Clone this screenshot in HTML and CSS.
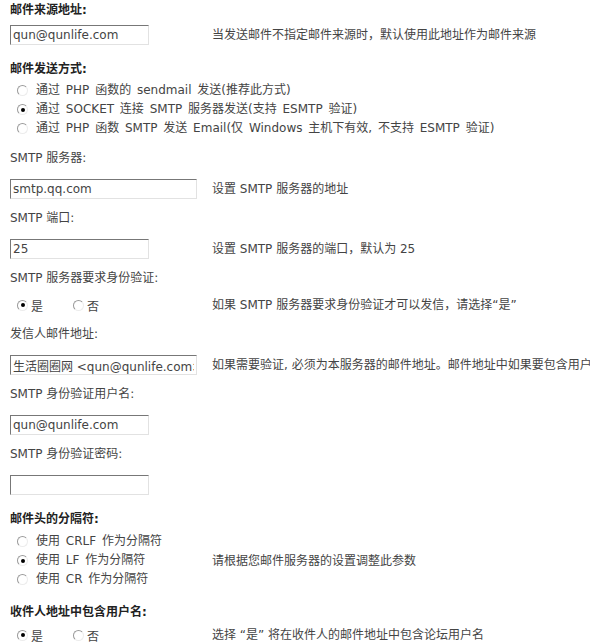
FILE: index.html
```html
<!DOCTYPE html>
<html lang="zh">
<head>
<meta charset="utf-8">
<title>邮件设置</title>
<link rel="stylesheet" href="styles.css">
</head>
<body>
<div class="form">
  <div class="head">邮件来源地址:</div>
  <div class="row r-first">
    <div class="ctl"><input class="txt short" type="text" value="qun@qunlife.com"></div>
    <div class="desc">当发送邮件不指定邮件来源时，默认使用此地址作为邮件来源</div>
  </div>

  <div class="head h-gap">邮件发送方式:</div>
  <div class="opts o-mail">
    <div class="opt"><span class="radio"></span><span class="otext">通过 PHP 函数的 sendmail 发送(推荐此方式)</span></div>
    <div class="opt"><span class="radio on"></span><span class="otext">通过 SOCKET 连接 SMTP 服务器发送(支持 ESMTP 验证)</span></div>
    <div class="opt"><span class="radio"></span><span class="otext">通过 PHP 函数 SMTP 发送 Email(仅 Windows 主机下有效, 不支持 ESMTP 验证)</span></div>
  </div>

  <div class="sub s-first">SMTP 服务器:</div>
  <div class="row">
    <div class="ctl"><input class="txt long" type="text" value="smtp.qq.com"></div>
    <div class="desc">设置 SMTP 服务器的地址</div>
  </div>

  <div class="sub">SMTP 端口:</div>
  <div class="row">
    <div class="ctl"><input class="txt short" type="text" value="25"></div>
    <div class="desc">设置 SMTP 服务器的端口，默认为 25</div>
  </div>

  <div class="sub">SMTP 服务器要求身份验证:</div>
  <div class="row r-radio">
    <div class="ctl yn">
      <span class="yes"><span class="radio on"></span>是</span>
      <span class="no"><span class="radio"></span>否</span>
    </div>
    <div class="desc">如果 SMTP 服务器要求身份验证才可以发信，请选择“是”</div>
  </div>

  <div class="sub">发信人邮件地址:</div>
  <div class="row">
    <div class="ctl"><input class="txt long" type="text" value="生活圈圈网 &lt;qun@qunlife.com&gt;"></div>
    <div class="desc">如果需要验证, 必须为本服务器的邮件地址。邮件地址中如果要包含用户</div>
  </div>

  <div class="sub">SMTP 身份验证用户名:</div>
  <div class="row">
    <div class="ctl"><input class="txt short" type="text" value="qun@qunlife.com"></div>
    <div class="desc"></div>
  </div>

  <div class="sub">SMTP 身份验证密码:</div>
  <div class="row">
    <div class="ctl"><input class="txt short" type="password" value=""></div>
    <div class="desc"></div>
  </div>

  <div class="head h-gap">邮件头的分隔符:</div>
  <div class="row r-opts">
    <div class="opts">
      <div class="opt"><span class="radio"></span><span class="otext">使用 CRLF 作为分隔符</span></div>
      <div class="opt"><span class="radio on"></span><span class="otext">使用 LF 作为分隔符</span></div>
      <div class="opt"><span class="radio"></span><span class="otext">使用 CR 作为分隔符</span></div>
    </div>
    <div class="desc">请根据您邮件服务器的设置调整此参数</div>
  </div>

  <div class="head h-gap2">收件人地址中包含用户名:</div>
  <div class="row r-last">
    <div class="ctl yn">
      <span class="yes"><span class="radio on"></span>是</span>
      <span class="no"><span class="radio"></span>否</span>
    </div>
    <div class="desc">选择 “是” 将在收件人的邮件地址中包含论坛用户名</div>
  </div>
</div>
</body>
</html>
```

FILE: styles.css
```css
html, body {
  margin: 0;
  padding: 0;
  background: #fff;
  overflow: hidden;
}

body {
  font-family: "DejaVu Sans", Verdana, "Noto Sans CJK SC", sans-serif;
  font-size: 12px;
  color: #444;
}

.form {
  padding: 0 0 0 10px;
}

.head {
  font-weight: bold;
  color: #222;
  line-height: 20px;
  height: 20px;
  white-space: nowrap;
}

.h-gap { margin-top: 14px; }
.h-gap2 { margin-top: 13px; }

.sub {
  line-height: 20px;
  height: 20px;
  margin-top: 9px;
  white-space: nowrap;
}

.s-first { margin-top: 10px; }

.row {
  display: grid;
  grid-template-columns: 202px minmax(0, 1fr);
  align-items: center;
  margin-top: 11px;
}

.r-first { margin-top: 5px; }
.r-radio { margin-top: 7px; height: 20px; }
.r-opts { margin-top: 3px; }
.r-last { margin-top: 3px; height: 20px; }

.ctl {
  display: flex;
  align-items: center;
}

.desc {
  white-space: nowrap;
  overflow: hidden;
  line-height: 20px;
}

.txt {
  box-sizing: border-box;
  height: 20px;
  margin: 0;
  padding: 0 2px;
  border: 1px solid;
  border-color: #777 #e2e2e2 #e2e2e2 #777;
  font-family: "DejaVu Sans", Verdana, "Noto Sans CJK SC", sans-serif;
  font-size: 12px;
  color: #444;
  background: #fff;
  outline: none;
}

.short { width: 139px; }
.long { width: 187px; }

.opts {
  display: flex;
  flex-direction: column;
}

.o-mail { margin-top: 2px; }

.opt {
  display: flex;
  align-items: center;
  height: 19px;
  line-height: 19px;
  padding-left: 7px;
  white-space: nowrap;
}

.otext { margin-left: 8px; word-spacing: 2px; }

.radio {
  box-sizing: border-box;
  display: inline-block;
  position: relative;
  width: 11px;
  height: 11px;
  border-radius: 50%;
  border: 1px solid;
  border-color: #9a9a9a #ececec #ececec #9a9a9a;
  background: #fff;
  flex: none;
}

.radio.on::after {
  content: "";
  position: absolute;
  left: 2.5px;
  top: 2.5px;
  width: 4px;
  height: 4px;
  border-radius: 50%;
  background: #000;
}

.yn {
  height: 20px;
  padding-left: 7px;
}

.yes, .no {
  display: inline-flex;
  align-items: center;
  gap: 3px;
}

.yes { width: 56px; }
```
